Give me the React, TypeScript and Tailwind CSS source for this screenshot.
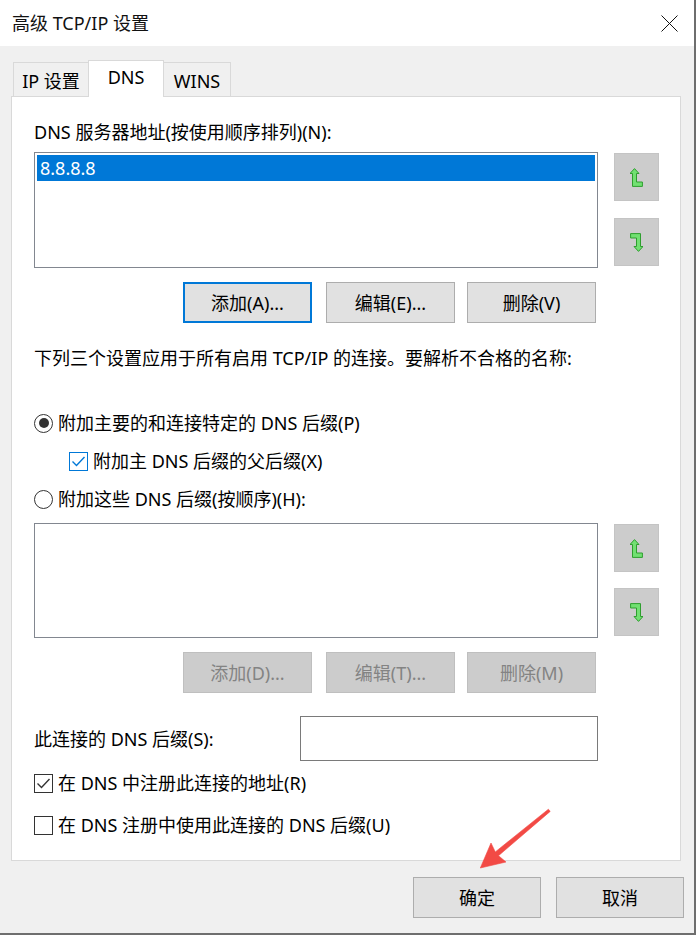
import React from "react";

const F = "font-['Noto_Sans','Noto_Sans_CJK_SC',sans-serif]";

function UpIcon({ down = false }: { down?: boolean }) {
  return (
    <svg width="13" height="19" viewBox="0 0 13 19" className={down ? "rotate-180" : ""}>
      <polygon
        points="4.5,0.6 9,5.5 6.5,5.5 6.5,14 12.4,14 12.4,18.4 2.5,18.4 2.5,5.5 0,5.5"
        fill="#72e072"
        stroke="#2e9e2e"
        strokeWidth="1"
      />
    </svg>
  );
}

function MoveButtons({ gap }: { gap: string }) {
  return (
    <div className={`ml-[16px] flex flex-col pt-[1px] ${gap}`}>
      <div className="w-[45px] h-[48px] bg-[#cccccc] border border-[#c4c4c4] flex items-center justify-center">
        <UpIcon />
      </div>
      <div className="w-[45px] h-[48px] bg-[#cccccc] border border-[#c4c4c4] flex items-center justify-center">
        <UpIcon down />
      </div>
    </div>
  );
}

function Btn({
  children,
  className = "",
  disabled = false,
  focused = false,
}: {
  children: React.ReactNode;
  className?: string;
  disabled?: boolean;
  focused?: boolean;
}) {
  const base = disabled
    ? "bg-[#cccccc] border border-[#bfbfbf] text-[#838383]"
    : focused
    ? "bg-[#e1e1e1] border-2 border-[#0078d7] text-black"
    : "bg-[#e1e1e1] border border-[#adadad] text-black";
  return (
    <div className={`w-[129px] h-[41px] flex items-center justify-center text-[18px] leading-none ${base} ${className}`}>
      {children}
    </div>
  );
}

function Radio({ checked }: { checked: boolean }) {
  return (
    <div className="w-[19px] h-[19px] rounded-full border border-[#333333] bg-white flex items-center justify-center shrink-0">
      {checked && <div className="w-[10px] h-[10px] rounded-full bg-[#333333]" />}
    </div>
  );
}

function Check({ checked, blue = false }: { checked: boolean; blue?: boolean }) {
  const color = blue ? "#0078d7" : "#333333";
  return (
    <div
      className={`w-[19px] h-[19px] border bg-white flex items-center justify-center shrink-0 ${
        blue ? "border-[#0078d7]" : "border-[#333333]"
      }`}
    >
      {checked && (
        <svg width="17" height="17" viewBox="0 0 17 17">
          <polyline points="2.5,8.5 6.5,12.5 14.5,4" fill="none" stroke={color} strokeWidth="1.4" />
        </svg>
      )}
    </div>
  );
}

export default function App() {
  return (
    <div className={`${F} relative w-[696px] h-[935px] bg-[#f0f0f0] border-r-2 border-b-2 border-[#6e6e6e] flex flex-col text-black overflow-hidden`}>
      {/* Title bar */}
      <div className="h-[46px] bg-white flex items-center justify-between pl-[12px] pr-[16px] shrink-0">
        <span className="text-[18px] leading-none text-[#111]">高级 TCP/IP 设置</span>
        <svg width="17" height="17" viewBox="0 0 17 17">
          <line x1="0.5" y1="0.5" x2="16.5" y2="16.5" stroke="#111" strokeWidth="1" />
          <line x1="16.5" y1="0.5" x2="0.5" y2="16.5" stroke="#111" strokeWidth="1" />
        </svg>
      </div>

      {/* Body */}
      <div className="pl-[11px] pr-[13px] pt-[14px] flex flex-col">
        {/* Tabs */}
        <div className="flex items-end h-[36px] pl-[2px] relative z-10">
          <div className="w-[75px] h-[34px] border border-r-0 border-b-0 border-[#d9d9d9] bg-[#f0f0f0] flex items-center justify-center text-[18px] leading-none pt-[2px]">
            IP 设置
          </div>
          <div className="w-[76px] h-[37px] -mb-px border border-b-0 border-[#d9d9d9] bg-white flex items-center justify-center text-[18px] leading-none pb-[4px]">
            DNS
          </div>
          <div className="w-[67px] h-[34px] border border-l-0 border-b-0 border-[#d9d9d9] bg-[#f0f0f0] flex items-center justify-center text-[18px] leading-none pt-[2px]">
            WINS
          </div>
        </div>

        {/* Panel */}
        <div className="h-[765px] bg-white border border-[#d9d9d9] pl-[22px] pr-[21px] flex flex-col text-[18px]">
          <div className="h-[26px] mt-[22px] flex items-center leading-none">DNS 服务器地址(按使用顺序排列)(N):</div>

          <div className="mt-[7px] flex">
            <div className="w-[564px] h-[116px] border border-[#828790] bg-white p-[2px]">
              <div className="h-[26px] bg-[#0078d7] text-white flex items-center pl-[3px] leading-none">8.8.8.8</div>
            </div>
            <MoveButtons gap="gap-[17px]" />
          </div>

          <div className="mt-[14px] flex">
            <Btn className="ml-[149px]" focused>
              添加(A)...
            </Btn>
            <Btn className="ml-[14px]">编辑(E)...</Btn>
            <Btn className="ml-[12px]">删除(V)</Btn>
          </div>

          <div className="h-[26px] mt-[22px] flex items-center leading-none">
            下列三个设置应用于所有启用 TCP/IP 的连接。要解析不合格的名称:
          </div>

          <div className="h-[26px] mt-[39px] flex items-center gap-[5px] leading-none">
            <Radio checked />
            <span>附加主要的和连接特定的 DNS 后缀(P)</span>
          </div>

          <div className="h-[26px] mt-[12px] pl-[35px] flex items-center gap-[5px] leading-none">
            <Check checked blue />
            <span>附加主 DNS 后缀的父后缀(X)</span>
          </div>

          <div className="h-[26px] mt-[12px] flex items-center gap-[5px] leading-none">
            <Radio checked={false} />
            <span>附加这些 DNS 后缀(按顺序)(H):</span>
          </div>

          <div className="mt-[11px] flex">
            <div className="w-[564px] h-[115px] border border-[#828790] bg-white" />
            <MoveButtons gap="gap-[16px]" />
          </div>

          <div className="mt-[14px] flex">
            <Btn className="ml-[149px]" disabled>
              添加(D)...
            </Btn>
            <Btn className="ml-[14px]" disabled>
              编辑(T)...
            </Btn>
            <Btn className="ml-[12px]" disabled>
              删除(M)
            </Btn>
          </div>

          <div className="mt-[23px] flex items-center">
            <span className="w-[266px] leading-none">此连接的 DNS 后缀(S):</span>
            <div className="w-[298px] h-[45px] border border-[#7a7a7a] bg-white" />
          </div>

          <div className="h-[26px] mt-[9px] flex items-center gap-[5px] leading-none">
            <Check checked />
            <span>在 DNS 中注册此连接的地址(R)</span>
          </div>

          <div className="h-[26px] mt-[16px] flex items-center gap-[5px] leading-none">
            <Check checked={false} />
            <span>在 DNS 注册中使用此连接的 DNS 后缀(U)</span>
          </div>
        </div>

        {/* Bottom buttons */}
        <div className="mt-[16px] flex justify-end">
          <div className="flex gap-[15px] mr-[-3px]">
            <div className="w-[128px] h-[41px] bg-[#e1e1e1] border border-[#adadad] flex items-center justify-center text-[18px] leading-none">
              确定
            </div>
            <div className="w-[128px] h-[41px] bg-[#e1e1e1] border border-[#adadad] flex items-center justify-center text-[18px] leading-none">
              取消
            </div>
          </div>
        </div>
      </div>

      {/* Red annotation arrow */}
      <svg className="absolute left-0 top-0 pointer-events-none" width="696" height="935" viewBox="0 0 696 935">
        <polygon
          points="548.4,809.2 495.3,851.9 491,843 480.3,868 506,862 498.5,855.7 550.2,811.4"
          fill="#f24a45"
          stroke="#f24a45"
          strokeWidth="0.6"
          strokeLinejoin="round"
        />
      </svg>
    </div>
  );
}
